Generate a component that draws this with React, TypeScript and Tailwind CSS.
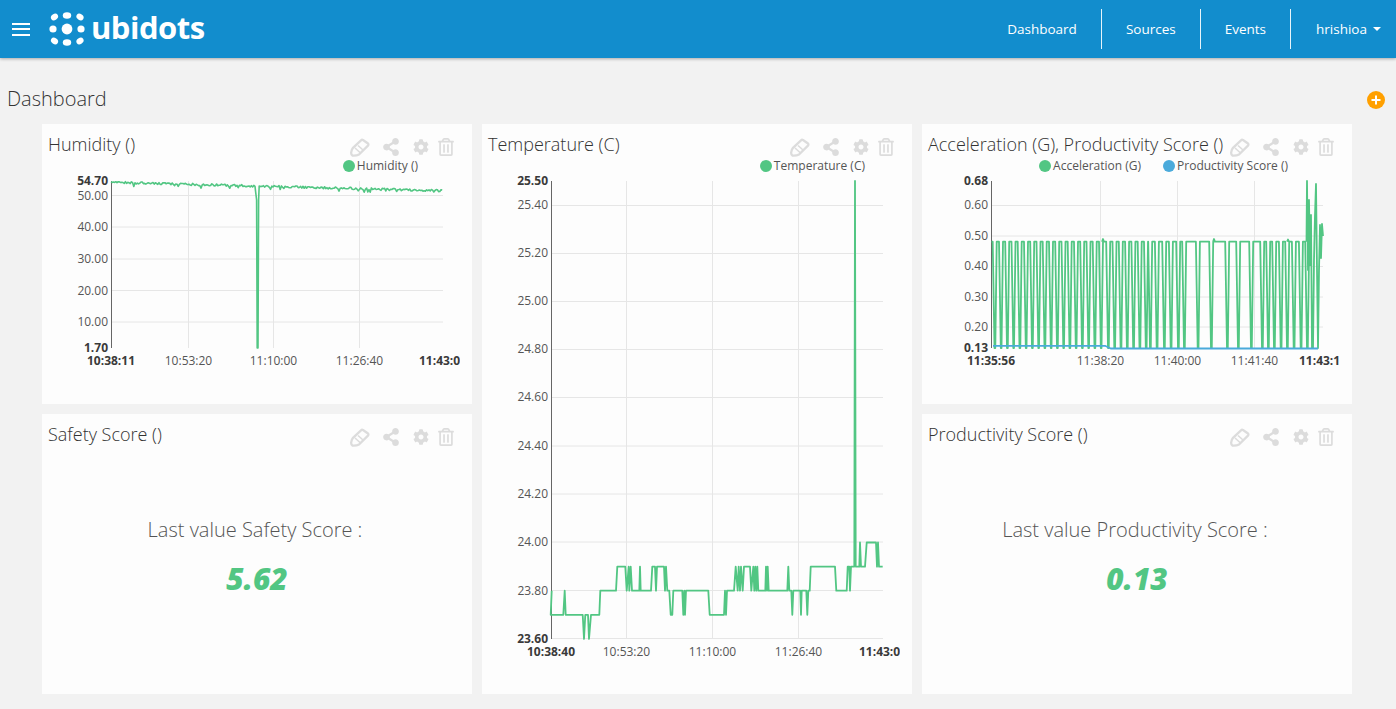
import { FaCog, FaRegTrashAlt, FaShareAlt } from 'react-icons/fa';

const GREEN = '#52c683';
const BLUE = '#4aaadb';

type Tick = { label: string; y: number; bold?: boolean };
type XTick = { label: string; x: number; bold?: boolean };
type Series = { d: string; color: string; width: number };

// Small seeded noise so that the humidity line looks the same on every load
function noise(seed: number) {
  const v = Math.sin(seed * 127.1) * 43758.5453;
  return v - Math.floor(v);
}

function humidityPath() {
  const pts: string[] = [];
  for (let x = 111; x <= 443; x += 1.2) {
    if (x > 256 && x < 259) continue;
    const base = 182.5 + ((x - 111) / 332) * 8.5;
    const jitter = (noise(x) - 0.6) * 2.2 + (noise(x * 3) > 0.93 ? 2.5 : 0);
    pts.push(`${x.toFixed(1)},${(base + jitter).toFixed(1)}`);
    if (x > 254.8 && x < 256) {
      pts.push('256.6,200', '257.2,348', '258,348', '258.6,200', '259.2,186');
    }
  }
  return 'M' + pts.join(' L');
}

// Zoomed-crop readings of the temperature line: [x in crop, value]
const tempSteps: [number, number][] = [
  [95, 23.8], [92, 23.7], [130, 23.7], [134, 23.8], [137, 23.7], [188, 23.7], [192, 23.6], [196, 23.7],
  [204, 23.7], [207, 23.6], [213, 23.7], [238, 23.7], [241, 23.8], [288, 23.8], [292, 23.9], [316, 23.9],
  [320, 23.8], [326, 23.9], [328, 23.8], [332, 23.9], [336, 23.8], [358, 23.8], [360, 23.9], [362, 23.8],
  [393, 23.8], [397, 23.9], [405, 23.9], [408, 23.8], [411, 23.9], [432, 23.9], [435, 23.8], [438, 23.9],
  [442, 23.8], [448, 23.8], [452, 23.7], [457, 23.7], [460, 23.8], [487, 23.8], [490, 23.7], [493, 23.8],
  [495, 23.7], [498, 23.8], [565, 23.8], [569, 23.7], [612, 23.7], [615, 23.8], [618, 23.7], [621, 23.8],
  [642, 23.8], [647, 23.9], [653, 23.8], [656, 23.9], [660, 23.8], [663, 23.9], [668, 23.8], [672, 23.9],
  [690, 23.9], [694, 23.8], [700, 23.9], [703, 23.8], [706, 23.9], [709, 23.8], [712, 23.9], [715, 23.8],
  [736, 23.8], [738, 23.9], [741, 23.8], [743, 23.9], [746, 23.8], [802, 23.8], [805, 23.9], [808, 23.8],
  [814, 23.8], [817, 23.7], [820, 23.8], [841, 23.8], [843, 23.7], [845, 23.8], [859, 23.8], [862, 23.7],
  [865, 23.8], [869, 23.8], [872, 23.9], [945, 23.9], [949, 23.8], [980, 23.8], [983, 23.9], [988, 23.9],
  [990, 23.8], [993, 23.9], [1003, 23.9], [1005, 25.5], [1007, 23.9], [1018, 23.9], [1020, 24], [1023, 23.9],
  [1035, 23.9], [1040, 24], [1068, 24], [1071, 23.9], [1074, 24], [1077, 23.9], [1088, 23.9],
];

function tempPath() {
  return 'M' + tempSteps.map(([zx, v]) => `${(520 + zx / 3).toFixed(1)},${(181 + (25.5 - v) * 241).toFixed(1)}`).join(' L');
}

function accelPath() {
  const high = 241.7;
  const low = 348;
  const bottoms: number[] = [];
  for (let x = 994.5; x < 1104; x += 6.25) bottoms.push(x);
  for (let x = 1108; x < 1150; x += 6.3) bottoms.push(x);
  bottoms.push(1150, 1156.7, 1164, 1170.7, 1178, 1184, 1197.7, 1211, 1227, 1238, 1251, 1262, 1268, 1274, 1280.7, 1287, 1293.7, 1300.7, 1307);
  const pts: string[] = [`991.5,${high}`];
  bottoms.forEach((b) => {
    pts.push(`${(b - 1.8).toFixed(1)},${high}`, `${b.toFixed(1)},${low}`, `${(b + 0.8).toFixed(1)},${low}`, `${(b + 2.2).toFixed(1)},${high}`);
  });
  pts.push('1306.5,241', '1307,181', '1308,270', '1309,200', '1310,265', '1311,215', '1312,348', '1313,348', '1314,260', '1315,215', '1316,184', '1317,270', '1318,348', '1319,270', '1320,225', '1321,258', '1322,224', '1323,236');
  const bumps = ' M1102,241.7 L1103,239 L1104,241.7 M1213,241.7 L1214,239 L1215,241.7 M1287,241.7 L1288,239.5 L1289,241.7';
  return 'M' + pts.join(' L') + bumps;
}

function PencilIcon() {
  return (
    <svg width="20" height="19" viewBox="0 0 20 19" fill="none" stroke="#dcdcdc" strokeWidth="2.3" strokeLinejoin="round">
      <path d="M13 2 L18 5.5 Q18.8 6.6 18 7.6 L9 16.5 Q6 18 2.6 17.6 Q1 16.8 1.2 14.4 Q1.6 11.5 3 9.8 L11 2.3 Q12 1.4 13 2 Z" />
      <path d="M5 10 L10.5 15 M8 7.5 L13 12" strokeWidth="1.6" />
    </svg>
  );
}

function WidgetIcons() {
  return (
    <div className="flex items-center text-[#dcdcdc] mt-[14px] h-[18px] shrink-0">
      <PencilIcon />
      <FaShareAlt className="ml-[11px] w-[20px] h-[18px]" />
      <FaCog className="ml-[12px] w-[16px] h-[16px]" />
      <FaRegTrashAlt className="ml-[9px] w-[16px] h-[18px]" />
    </div>
  );
}

function WidgetHead({ title }: { title: string }) {
  return (
    <div className="flex items-start justify-between h-[34px] pl-[6px] pr-[18px] shrink-0">
      <h2 className="mt-[6px] text-[18px] leading-[28px] font-light text-[#333] whitespace-nowrap">{title}</h2>
      <WidgetIcons />
    </div>
  );
}

function Legend({ items, className }: { items: { label: string; color: string }[]; className: string }) {
  return (
    <div className={`flex justify-end items-center gap-[22px] h-[16px] text-[12px] text-[#555] shrink-0 ${className}`}>
      {items.map((item) => (
        <div key={item.label} className="flex items-center">
          <span className="w-[12px] h-[12px] rounded-full mr-[2px]" style={{ backgroundColor: item.color }} />
          {item.label}
        </div>
      ))}
    </div>
  );
}

// viewBox keeps page coordinates, so readings from the screenshot can be used as they are
function Chart(props: {
  left: number;
  right: number;
  top: number;
  bottom: number;
  yTicks: Tick[];
  grid: number[];
  xTicks: XTick[];
  series: Series[];
}) {
  const { left, right, top, bottom, yTicks, grid, xTicks, series } = props;
  const vx = left - 69;
  const height = bottom - 174 + 32;
  return (
    <svg width="418" height={height} viewBox={`${vx} 174 418 ${height}`} className="block">
      {grid.map((y) => (
        <line key={y} x1={left} x2={right} y1={y} y2={y} stroke="#e6e6e6" strokeWidth="1" />
      ))}
      {xTicks.slice(1, -1).map((t) => (
        <line key={t.label} x1={t.x} x2={t.x} y1={top} y2={bottom} stroke="#e6e6e6" strokeWidth="1" />
      ))}
      <line x1={left + 0.5} x2={left + 0.5} y1={top} y2={bottom} stroke="#666" strokeWidth="1" />
      {series.map((s) => (
        <path key={s.color} d={s.d} fill="none" stroke={s.color} strokeWidth={s.width} strokeLinejoin="round" />
      ))}
      {yTicks.map((t) => (
        <text key={t.label} x={left - 3} y={t.y + 4} textAnchor="end" fontSize="12" fontWeight={t.bold ? 700 : 400} fill={t.bold ? '#3a3a3a' : '#555'}>
          {t.label}
        </text>
      ))}
      {xTicks.map((t) => (
        <text key={t.label} x={t.x} y={bottom + 17} textAnchor="middle" fontSize="12" fontWeight={t.bold ? 700 : 400} fill={t.bold ? '#3a3a3a' : '#555'}>
          {t.label}
        </text>
      ))}
    </svg>
  );
}

function ScoreCard({ title, caption, value }: { title: string; caption: string; value: string }) {
  return (
    <section className="bg-[#fdfdfd] flex flex-col">
      <WidgetHead title={title} />
      <div className="flex flex-col items-center mt-[66px]">
        <p className="pr-[4px] text-[20px] leading-[32px] font-light text-[#555]">{caption}</p>
        <p className="mt-[11px] text-[30px] leading-[44px] font-extrabold italic text-[#52c683]">{value}</p>
      </div>
    </section>
  );
}

export default function App() {
  return (
    <div className="min-h-screen bg-[#f2f2f2] font-['Open_Sans',sans-serif] overflow-hidden">
      <header className="h-[58px] bg-[#128dcd] shadow-[0_1px_3px_rgba(0,0,0,0.3)] flex items-center justify-between">
        <div className="flex items-center">
          <button className="ml-[12px] w-[18px] flex flex-col gap-[3.5px]">
            <span className="h-[2px] bg-white" />
            <span className="h-[2px] bg-white" />
            <span className="h-[2px] bg-white" />
          </button>
          <svg width="42" height="38" viewBox="50 10 42 38" className="ml-[19px]" fill="#fff">
            <ellipse cx="55.5" cy="17" rx="3.8" ry="3" transform="rotate(-35 55.5 17)" />
            <ellipse cx="68" cy="15.5" rx="4.2" ry="3.2" />
            <ellipse cx="81" cy="17" rx="3.8" ry="3" transform="rotate(35 81 17)" />
            <circle cx="54" cy="29" r="3.6" />
            <circle cx="68" cy="29" r="5.4" />
            <circle cx="82" cy="29" r="3.6" />
            <ellipse cx="55.5" cy="41" rx="3.8" ry="3" transform="rotate(35 55.5 41)" />
            <ellipse cx="68" cy="42.5" rx="4.2" ry="3.2" />
            <ellipse cx="81" cy="41" rx="3.8" ry="3" transform="rotate(-35 81 41)" />
          </svg>
          <span className="text-white text-[31px] font-bold leading-none tracking-[-0.5px] -mt-[3px]">ubidots</span>
        </div>
        <nav className="flex items-center h-[40px] text-white text-[13.5px]">
          <a className="px-[24px] h-full flex items-center border-r border-white/90">Dashboard</a>
          <a className="px-[24px] h-full flex items-center border-r border-white/90">Sources</a>
          <a className="px-[24px] h-full flex items-center border-r border-white/90">Events</a>
          <a className="pl-[25px] pr-[15px] h-full flex items-center">
            hrishioa
            <span className="ml-[6px] border-x-[4px] border-x-transparent border-t-[4px] border-t-white" />
          </a>
        </nav>
      </header>

      <div className="flex items-start justify-between h-[66px] pl-[7px] pr-[11px] pt-[27px]">
        <h1 className="text-[20px] leading-[28px] font-light text-[#333]">Dashboard</h1>
        <button className="mt-[6px] w-[18px] h-[18px] rounded-full bg-[#ffa000] flex items-center justify-center">
          <svg width="10" height="10" viewBox="0 0 10 10" stroke="#fff" strokeWidth="2">
            <path d="M5 0.5v9M0.5 5h9" />
          </svg>
        </button>
      </div>

      <main className="ml-[42px] grid grid-cols-[repeat(3,430px)] grid-rows-[280px_280px] gap-[10px]">
        <section className="bg-[#fdfdfd] flex flex-col">
          <WidgetHead title="Humidity ()" />
          <Legend items={[{ label: 'Humidity ()', color: GREEN }]} className="pr-[54px]" />
          <Chart
            left={111}
            right={443}
            top={181}
            bottom={348}
            grid={[195.5, 227, 259, 290.5, 322]}
            yTicks={[
              { label: '54.70', y: 181, bold: true },
              { label: '50.00', y: 195.5 },
              { label: '40.00', y: 227 },
              { label: '30.00', y: 259 },
              { label: '20.00', y: 290.5 },
              { label: '10.00', y: 322 },
              { label: '1.70', y: 348, bold: true },
            ]}
            xTicks={[
              { label: '10:38:11', x: 111, bold: true },
              { label: '10:53:20', x: 188.5 },
              { label: '11:10:00', x: 273.5 },
              { label: '11:26:40', x: 359.5 },
              { label: '11:43:00', x: 443, bold: true },
            ]}
            series={[{ d: humidityPath(), color: GREEN, width: 1.6 }]}
          />
        </section>

        <section className="row-span-2 bg-[#fdfdfd] flex flex-col">
          <WidgetHead title="Temperature (C)" />
          <Legend items={[{ label: 'Temperature (C)', color: GREEN }]} className="pr-[47px]" />
          <Chart
            left={551}
            right={883}
            top={181}
            bottom={639}
            grid={[205.5, 253.5, 301.5, 349.5, 397.5, 446, 494, 542, 590.5, 638.5]}
            yTicks={[
              { label: '25.50', y: 181, bold: true },
              { label: '25.40', y: 205 },
              { label: '25.20', y: 253 },
              { label: '25.00', y: 301 },
              { label: '24.80', y: 349 },
              { label: '24.60', y: 397 },
              { label: '24.40', y: 446 },
              { label: '24.20', y: 494 },
              { label: '24.00', y: 542 },
              { label: '23.80', y: 590.5 },
              { label: '23.60', y: 639, bold: true },
            ]}
            xTicks={[
              { label: '10:38:40', x: 551, bold: true },
              { label: '10:53:20', x: 626.5 },
              { label: '11:10:00', x: 712.5 },
              { label: '11:26:40', x: 798.5 },
              { label: '11:43:00', x: 883, bold: true },
            ]}
            series={[{ d: tempPath(), color: GREEN, width: 1.8 }]}
          />
        </section>

        <section className="bg-[#fdfdfd] flex flex-col">
          <WidgetHead title="Acceleration (G), Productivity Score ()" />
          <Legend
            items={[
              { label: 'Acceleration (G)', color: GREEN },
              { label: 'Productivity Score ()', color: BLUE },
            ]}
            className="pr-[64px]"
          />
          <Chart
            left={991}
            right={1323}
            top={181}
            bottom={348}
            grid={[205.5, 236, 266.5, 297, 327]}
            yTicks={[
              { label: '0.68', y: 181, bold: true },
              { label: '0.60', y: 205 },
              { label: '0.50', y: 236 },
              { label: '0.40', y: 266 },
              { label: '0.30', y: 297 },
              { label: '0.20', y: 327 },
              { label: '0.13', y: 348, bold: true },
            ]}
            xTicks={[
              { label: '11:35:56', x: 991, bold: true },
              { label: '11:38:20', x: 1100.5 },
              { label: '11:40:00', x: 1177.5 },
              { label: '11:41:40', x: 1254.5 },
              { label: '11:43:16', x: 1323, bold: true },
            ]}
            series={[
              { d: accelPath(), color: GREEN, width: 1.8 },
              { d: 'M993,345.8 L1105,345.8 L1110.7,348.5 L1318,348.5', color: BLUE, width: 1.8 },
            ]}
          />
        </section>

        <ScoreCard title="Safety Score ()" caption="Last value Safety Score :" value="5.62" />
        <ScoreCard title="Productivity Score ()" caption="Last value Productivity Score :" value="0.13" />
      </main>
    </div>
  );
}
